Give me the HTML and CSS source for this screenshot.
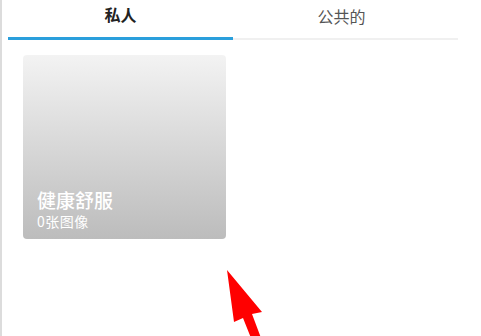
FILE: index.html
```html
<!DOCTYPE html>
<html lang="zh">
<head>
<meta charset="utf-8">
<link rel="stylesheet" href="styles.css">
</head>
<body>
<div class="page">
  <div class="tabs">
    <div class="tab active">私人</div>
    <div class="tab">公共的</div>
  </div>
  <div class="albums">
    <div class="card">
      <div class="card-title">健康舒服</div>
      <div class="card-sub">0张图像</div>
    </div>
  </div>
  <svg class="arrow" width="60" height="81" viewBox="0 0 60 81">
    <polygon points="7,15 42,57 32,59 41,83 31,83 23,63 14,67" fill="#ff0000"/>
  </svg>
</div>
</body>
</html>
```
FILE: styles.css
```css
html, body {
  margin: 0;
  padding: 0;
  background: #fff;
}
body {
  width: 481px;
  height: 336px;
  overflow: hidden;
  font-family: "Noto Sans CJK SC", "Noto Sans", sans-serif;
}
.page {
  position: relative;
  height: 336px;
  border-left: 2px solid #dcdcdc;
  box-sizing: border-box;
  padding-left: 6px;
}
.tabs {
  display: flex;
  width: 450px;
}
.tab {
  flex: 1;
  text-align: center;
  font-size: 16px;
  line-height: 22px;
  padding-top: 3px;
  height: 33px;
  color: #555;
  border-bottom: 2px solid #f0f0f0;
  margin-top: 2px;
}
.tab + .tab {
  text-indent: -8px;
}
.tab.active {
  color: #222;
  font-weight: 700;
  border-bottom: 3px solid #2a9fdc;
  margin-top: 0;
  height: 34px;
}
.albums {
  padding: 15px 0 0 15px;
}
.card {
  width: 203px;
  height: 184px;
  border-radius: 4px;
  background: linear-gradient(to bottom, #f3f3f3, #bcbcbc);
  box-sizing: border-box;
  padding: 133px 14px 0 14px;
  color: #fff;
}
.card-title {
  font-size: 19px;
  line-height: 24px;
  font-weight: 500;
}
.card-sub {
  font-size: 14px;
  line-height: 19px;
  letter-spacing: 0.5px;
}
.arrow {
  position: absolute;
  left: 218px;
  top: 255px;
}
```
